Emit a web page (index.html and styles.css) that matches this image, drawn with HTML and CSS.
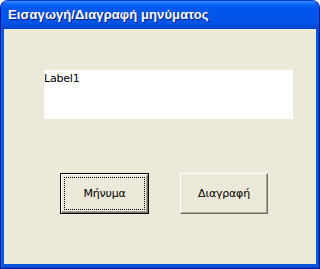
FILE: index.html
```html
<!DOCTYPE html>
<html>
<head>
  <meta charset="UTF-8">
  <title>Εισαγωγή/Διαγραφή μηνύματος</title>
  <link rel="stylesheet" href="styles.css">
</head>
<body>

<div class="window">
  <div class="titlebar">
    <span class="title">Εισαγωγή/Διαγραφή μηνύματος</span>
  </div>

  <div class="client">
    <div class="label-box">Label1</div>

    <div class="buttons">
      <button class="btn btn-default"><span class="focus">Μήνυμα</span></button>
      <button class="btn">Διαγραφή</button>
    </div>
  </div>
</div>

</body>
</html>
```

FILE: styles.css
```css
/* --- RESET & BASE --- */
* {
  margin: 0;
  padding: 0;
  box-sizing: border-box;
}
html, body {
  width: 320px;
  height: 269px;
  overflow: hidden;
  background: #fff;
  font-family: 'DejaVu Sans', sans-serif;
}

/* --- WINDOW FRAME (Luna blue) --- */
.window {
  width: 320px;
  height: 269px;
  display: flex;
  flex-direction: column;
  border-radius: 8px 8px 0 0;
  background: #0855DD;
  border: 1px solid #0019A0;
  border-top-color: #0831D9;
  box-shadow: inset 1px 0 #166AEE, inset -1px 0 #0846CC, inset 0 -1px #0A3CC0;
  overflow: hidden;
}

.titlebar {
  height: 28px;
  display: flex;
  align-items: center;
  padding: 0 0 1px 7px;
  background: linear-gradient(to bottom,
    #3D95FF 0px, #0A66FB 3px, #0058EE 7px, #0055E8 16px, #0254E6 22px, #0046CC 27px, #003DBB 28px);
}

.title {
  color: #fff;
  font-family: 'Liberation Sans', sans-serif;
  font-weight: bold;
  font-size: 13px;
  letter-spacing: 0.1px;
  text-shadow: 1px 1px #0A1C80;
}

/* --- CLIENT AREA --- */
.client {
  flex: 1;
  margin: 0 3px 4px 3px;
  background: #ECE9D8;
  padding: 41px 0 0 40px;
}

.label-box {
  width: 249px;
  height: 49px;
  background: #fff;
  padding: 2px 0 0 0;
  font-size: 11px;
  line-height: 13px;
  color: #000;
  letter-spacing: -0.2px;
}

.buttons {
  display: flex;
  gap: 31px;
  margin: 54px 0 0 16px;
}

.btn {
  width: 88px;
  height: 41px;
  background: #ECE9D8;
  font-family: 'DejaVu Sans', sans-serif;
  font-size: 11px;
  letter-spacing: -0.2px;
  color: #000;
  border: 1px solid;
  border-color: #fff #716F64 #716F64 #fff;
  box-shadow: inset -1px -1px #ACA899;
  display: flex;
  align-items: center;
  justify-content: center;
}

.btn-default {
  width: 89px;
  border: 1px solid #000;
  box-shadow: inset 1px 1px #fff, inset -1px -1px #716F64, inset -2px -2px #ACA899;
  padding: 3px;
}

.focus {
  flex: 1;
  align-self: stretch;
  display: flex;
  align-items: center;
  justify-content: center;
  border: 1px dotted #000;
}
```
